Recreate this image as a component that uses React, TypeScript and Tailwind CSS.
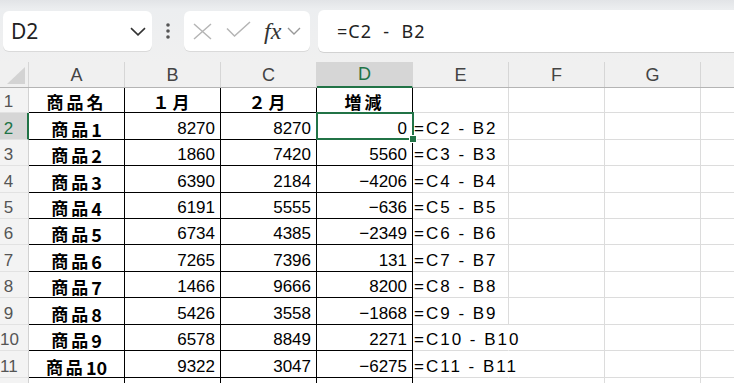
import type { ReactNode } from 'react'

const JP = "font-['Noto_Sans_CJK_JP',sans-serif]"
const NUM = "font-['Liberation_Sans','Noto_Sans_CJK_JP',sans-serif]"

type Row = { h: string; name: string; no: string; b: string; c: string; d: string; e: string; wide?: boolean }

const rows: Row[] = [
  { h: 'h-[27px]', name: '商品', no: '1', b: '8270', c: '8270', d: '0', e: '=C2 - B2' },
  { h: 'h-[26px]', name: '商品', no: '2', b: '1860', c: '7420', d: '5560', e: '=C3 - B3' },
  { h: 'h-[27px]', name: '商品', no: '3', b: '6390', c: '2184', d: '−4206', e: '=C4 - B4' },
  { h: 'h-[26px]', name: '商品', no: '4', b: '6191', c: '5555', d: '−636', e: '=C5 - B5' },
  { h: 'h-[26px]', name: '商品', no: '5', b: '6734', c: '4385', d: '−2349', e: '=C6 - B6' },
  { h: 'h-[27px]', name: '商品', no: '6', b: '7265', c: '7396', d: '131', e: '=C7 - B7' },
  { h: 'h-[26px]', name: '商品', no: '7', b: '1466', c: '9666', d: '8200', e: '=C8 - B8' },
  { h: 'h-[27px]', name: '商品', no: '8', b: '5426', c: '3558', d: '−1868', e: '=C9 - B9' },
  { h: 'h-[26px]', name: '商品', no: '9', b: '6578', c: '8849', d: '2271', e: '=C10 - B10', wide: true },
  { h: 'h-[27px]', name: '商品', no: '10', b: '9322', c: '3047', d: '−6275', e: '=C11 - B11', wide: true },
  { h: 'h-[27px]', name: '商品', no: '11', b: '8485', c: '6747', d: '−1738', e: '=C12 - B12', wide: true },
]

function RowHead({ n, h, active }: { n: number; h: string; active?: boolean }) {
  return (
    <div
      className={`${h} w-[29px] shrink-0 flex items-end overflow-hidden border-b border-[#e2e2e2] ${NUM} text-[17px] leading-[20px] ${
        active
          ? 'bg-[#d6d6d6] text-[#217346] border-r-2 border-r-[#217346]'
          : 'bg-[#f3f3f3] text-[#555] border-r border-r-[#d2d2d2]'
      }`}
    >
      <span className="w-[17px] text-center">{n}</span>
    </div>
  )
}

function Cell({ h, children, right, grid, className = '' }: { h: string; children?: ReactNode; right?: boolean; grid?: boolean; className?: string }) {
  return (
    <div
      className={`${h} w-[96px] shrink-0 flex items-end border-r border-b leading-[20px] whitespace-nowrap ${
        grid ? 'border-[#dcdcdc]' : 'border-black'
      } ${right ? 'justify-end pr-[5px]' : ''} ${className}`}
    >
      {children}
    </div>
  )
}

function Toolbar() {
  return (
    <div className="h-[62px] flex items-start pt-[10px] bg-[linear-gradient(to_bottom,#e2e4e7_0px,#eceef0_9px,#f0f0f0_100%)]">
      <div className="ml-[3px] mt-[1px] w-[149px] h-[40px] bg-white rounded-[6px] shadow-[0_1px_0_#dadada] flex items-center pl-[8px] pr-[6px]">
        <span className="font-['Noto_Sans',sans-serif] text-[21px] text-[#222] leading-none">D2</span>
        <svg className="ml-auto" width="16" height="9" viewBox="0 0 16 9">
          <path d="M1 1.2 L8 7.8 L15 1.2" fill="none" stroke="#333" strokeWidth="1.6" />
        </svg>
      </div>
      <div className="w-[32px] h-[42px] flex items-center justify-center">
        <svg width="4" height="16" viewBox="0 0 4 16">
          <circle cx="2" cy="2" r="1.8" fill="#555" />
          <circle cx="2" cy="8" r="1.8" fill="#555" />
          <circle cx="2" cy="14" r="1.8" fill="#555" />
        </svg>
      </div>
      <div className="mt-[1px] w-[126px] h-[40px] bg-white rounded-[6px] shadow-[0_1px_0_#dadada] flex items-center">
        <svg className="ml-[9px]" width="19" height="17" viewBox="0 0 19 17">
          <path d="M1 1 L18 16 M18 1 L1 16" stroke="#b5b5b5" strokeWidth="1.5" fill="none" />
        </svg>
        <svg className="ml-[14px] mt-[-4px]" width="25" height="16" viewBox="0 0 25 16">
          <path d="M1 7.5 L8.5 15 L24 1" stroke="#b5b5b5" strokeWidth="1.5" fill="none" />
        </svg>
        <span className="ml-[13px] font-['Liberation_Serif',serif] italic text-[24px] leading-none text-[#333]">fx</span>
        <svg className="ml-[6px]" width="14" height="8" viewBox="0 0 14 8">
          <path d="M1 1 L7 7 L13 1" fill="none" stroke="#999" strokeWidth="1.4" />
        </svg>
      </div>
      <div className="ml-[8px] flex-1 h-[42px] bg-white rounded-l-[6px] shadow-[0_1px_0_#d2d2d2] flex items-center pl-[19px]">
        <span className="font-['Noto_Sans',sans-serif] text-[18px] tracking-[1px] text-[#222] whitespace-pre">=C2  -  B2</span>
      </div>
    </div>
  )
}

export default function App() {
  const cols = ['A', 'B', 'C', 'D', 'E', 'F', 'G']
  const head = `justify-center ${JP} font-bold text-[17px] tracking-[3px] text-black`
  return (
    <div className="w-[734px] h-[383px] overflow-hidden bg-white">
      <Toolbar />
      <div className="flex h-[26px] bg-[#f0f0f0] border-b border-[#b4b4b4]">
        <div className="w-[29px] shrink-0 border-r border-[#d6d6d6] flex items-end justify-end pr-[3px] pb-[3px]">
          <svg width="18" height="17" viewBox="0 0 18 17">
            <path d="M18 0 L18 17 L0 17 Z" fill="#d3d3d3" />
          </svg>
        </div>
        {cols.map((c) => (
          <div
            key={c}
            className={`w-[96px] shrink-0 border-r border-[#d6d6d6] flex items-end justify-center pb-[2px] ${NUM} text-[18px] leading-[20px] ${
              c === 'D' ? 'bg-[#d6d6d6] text-[#217346] border-b-2 border-b-[#217346] mb-[-1px]' : 'text-[#444]'
            }`}
          >
            {c}
          </div>
        ))}
        <div className="w-[34px] shrink-0" />
      </div>

      <div className="flex">
        <RowHead n={1} h="h-[25px]" />
        <Cell h="h-[25px]" className={head}>商品名</Cell>
        <Cell h="h-[25px]" className={head}>１月</Cell>
        <Cell h="h-[25px]" className={head}>２月</Cell>
        <Cell h="h-[25px]" className={head}>増減</Cell>
        <Cell h="h-[25px]" grid />
        <Cell h="h-[25px]" grid />
        <Cell h="h-[25px]" grid />
        <Cell h="h-[25px]" grid />
      </div>

      {rows.map((r, i) => (
        <div key={r.no} className="flex">
          <RowHead n={i + 2} h={r.h} active={i === 0} />
          <Cell h={r.h} className={`justify-center ${JP} font-bold text-[17px] text-black`}>
            <span className="tracking-[3px]">{r.name}</span>
            <span className="text-[18px]">{r.no}</span>
          </Cell>
          <Cell h={r.h} right className={`${NUM} text-[17px] text-black`}>{r.b}</Cell>
          <Cell h={r.h} right className={`${NUM} text-[17px] text-black`}>{r.c}</Cell>
          <Cell h={r.h} right className={`${NUM} text-[17px] text-black relative`}>
            {r.d}
            {i === 0 && (
              <div className="absolute left-[-1px] top-[-1px] w-[98px] h-[28px] border-2 border-[#217346] z-10">
                <div className="absolute right-[-5px] bottom-[-5px] w-[8px] h-[8px] bg-[#217346] border border-white" />
              </div>
            )}
          </Cell>
          <Cell h={r.h} grid className={`${NUM} text-[17px] tracking-[2px] text-black pl-[1px] ${r.wide ? 'border-r-transparent' : ''}`}>
            {r.e}
          </Cell>
          <Cell h={r.h} grid />
          <Cell h={r.h} grid />
          <Cell h={r.h} grid />
        </div>
      ))}
    </div>
  )
}
